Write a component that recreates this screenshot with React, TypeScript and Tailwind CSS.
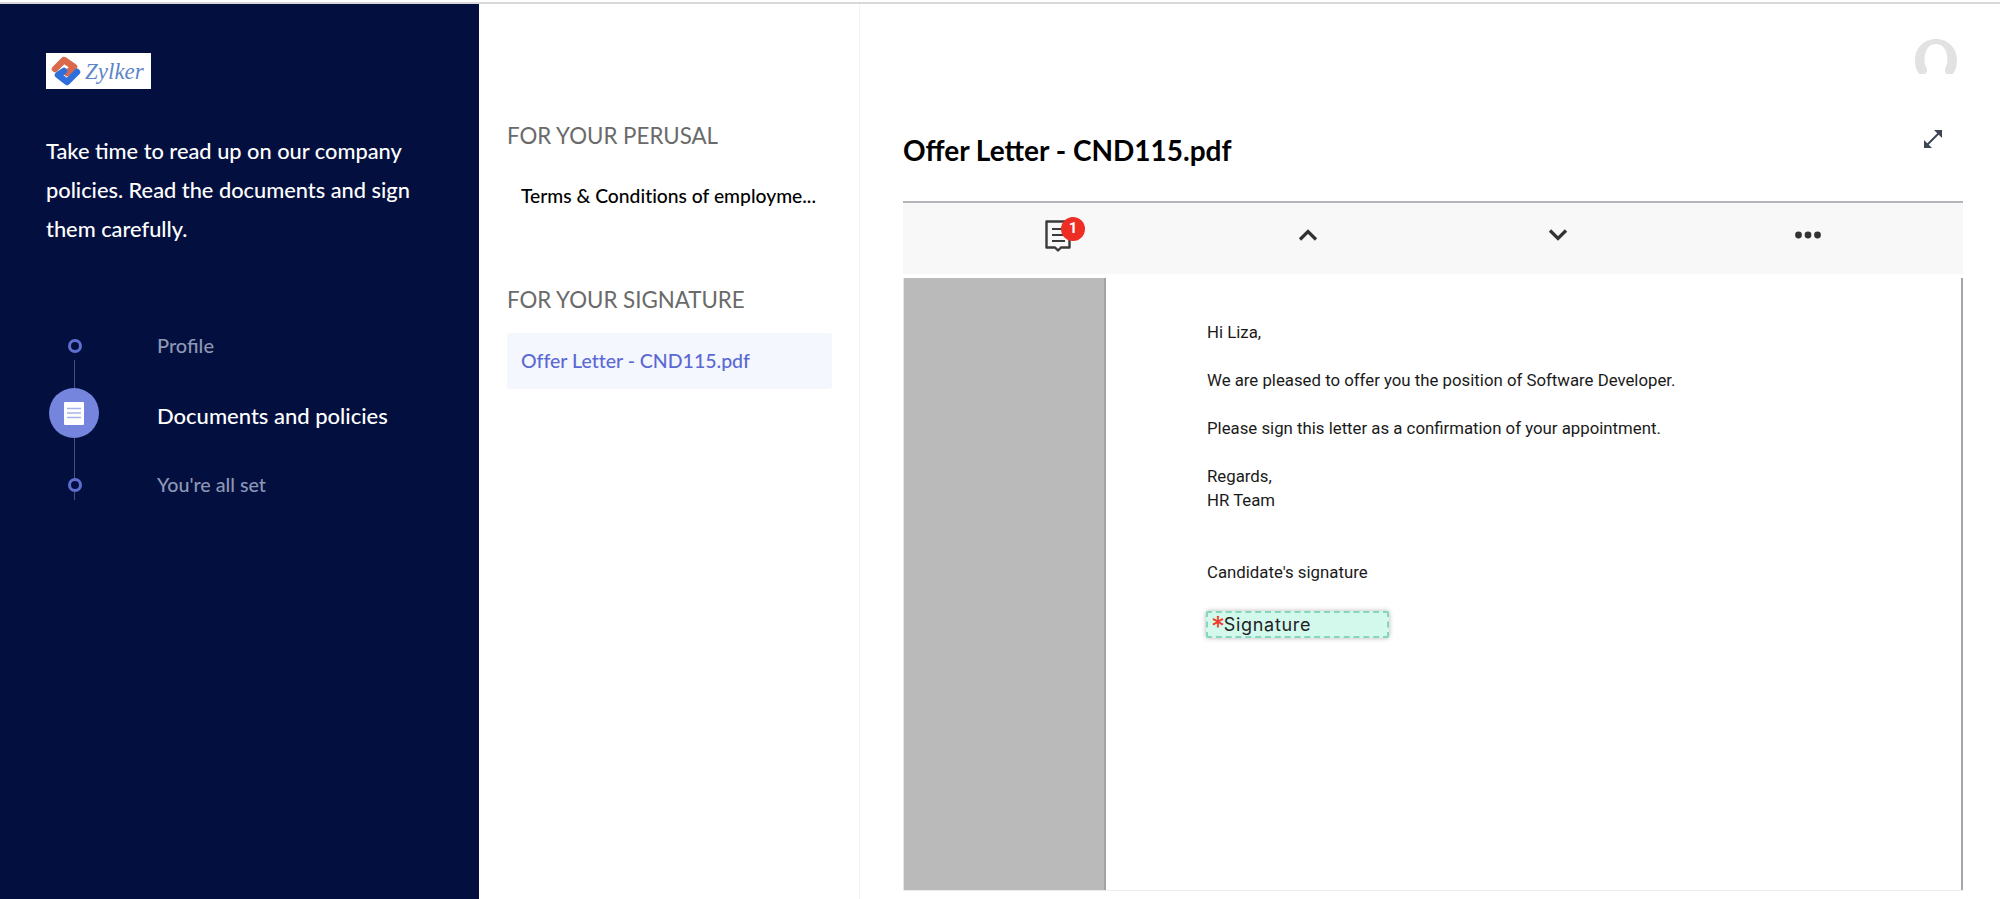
function ZylkerLogo() {
  return (
    <div className="flex items-center w-[105px] h-[36px] bg-white pl-[4px] overflow-hidden">
      <svg width="32" height="32" viewBox="0 0 32 32" fill="none" className="shrink-0">
        <path d="M5 14 L14 5 L24 12 L17 18" stroke="#d9694a" strokeWidth="6.5" strokeLinejoin="round" strokeLinecap="round" />
        <path d="M27 17 L17 27 L8 20 L14 16" stroke="#2f6fdc" strokeWidth="6.5" strokeLinejoin="round" strokeLinecap="round" />
      </svg>
      <span className="ml-[3px] font-['Liberation_Serif',serif] italic text-[23px] leading-none text-[#5d86c9]">Zylker</span>
    </div>
  )
}

function StepRing() {
  return <div className="w-[14px] h-[14px] ml-[2px] rounded-full border-[3px] border-[#5f6fd0]" />
}

function Sidebar() {
  return (
    <aside className="w-[479px] shrink-0 bg-[#03103f] px-[46px] pt-[49px] font-['Lato',sans-serif]">
      <ZylkerLogo />
      <p className="mt-[42px] text-[21.8px] leading-[39px] font-medium text-white">
        Take time to read up on our company policies. Read the documents and sign them carefully.
      </p>

      <div className="mt-[91px] flex">
        <div className="w-[62px] flex flex-col items-center ml-[-3px]">
          <StepRing />
          <div className="w-[1px] h-[28px] mt-[7px] bg-[#46507a]" />
          <div className="w-[50px] h-[50px] rounded-full bg-[#7584dc] flex items-center justify-center">
            <svg width="20" height="23" viewBox="0 0 20 23">
              <rect width="20" height="23" rx="1" fill="#fff" />
              <path d="M3 6.5h14M3 11h14M3 15.5h14" stroke="#a9b2ea" strokeWidth="1.4" />
            </svg>
          </div>
          <div className="w-[1px] h-[40px] bg-[#46507a]" />
          <StepRing />
          <div className="w-[1px] h-[8px] bg-[#46507a]" />
        </div>
        <div className="ml-[52px] flex flex-col">
          <span className="text-[20px] leading-[24px] mt-[-6px] font-medium text-[#8d97b5]">Profile</span>
          <span className="text-[22px] leading-[28px] mt-[45px] font-medium text-white">Documents and policies</span>
          <span className="text-[19.7px] leading-[24px] mt-[43px] font-medium text-[#8d97b5]">You're all set</span>
        </div>
      </div>
    </aside>
  )
}

function DocList() {
  return (
    <section className="w-[381px] shrink-0 pl-[28px] pr-[27px] pt-[118px] border-r border-[#f3f3f5] font-['Lato',sans-serif] [font-variant-ligatures:none]">
      <h3 className="text-[22.3px] leading-[28px] text-[#6a6a6a]">FOR YOUR PERUSAL</h3>
      <div className="mt-[32px] pl-[14px] text-[19.3px] leading-[28px] font-medium text-black whitespace-nowrap">Terms &amp; Conditions of employme...</div>
      <h3 className="mt-[76px] text-[22.3px] leading-[28px] text-[#6a6a6a]">FOR YOUR SIGNATURE</h3>
      <div className="mt-[19px] h-[56px] rounded-[3px] bg-[#f5f7fe] pl-[14px] flex items-center text-[19.5px] font-medium text-[#5a69d3]">
        Offer Letter - CND115.pdf
      </div>
    </section>
  )
}

function Viewer() {
  return (
    <div className="mt-[33px] h-[690px] flex flex-col border-t-2 border-[#b4b4ba] border-b border-b-[#ecebf2]">
      <div className="h-[71px] shrink-0 bg-[#f8f8f8] grid grid-cols-[repeat(4,250px)] items-center pl-[30px] pb-[8px]">
        <div className="flex justify-center">
          <div className="relative w-[26px] h-[33px] mt-[3px]">
            <svg width="26" height="33" viewBox="0 0 26 33" fill="none">
              <path d="M1.5 1.5h23v26h-8.5l-3 3-3-3h-8.5z" stroke="#3a3a3a" strokeWidth="2.4" strokeLinejoin="round" />
              <path d="M7 9h13M7 15h13M7 21h13" stroke="#3a3a3a" strokeWidth="2.2" />
            </svg>
            <div className="absolute top-[-3px] left-[16px] w-[24px] h-[24px] rounded-full bg-[#ee2e24] text-white text-[15px] font-bold flex items-center justify-center font-['Roboto',sans-serif]">1</div>
          </div>
        </div>
        <div className="flex justify-center">
          <svg width="20" height="12" viewBox="0 0 20 12" fill="none">
            <path d="M2 10.5 L10 2.5 L18 10.5" stroke="#333" strokeWidth="3.2" />
          </svg>
        </div>
        <div className="flex justify-center">
          <svg width="20" height="12" viewBox="0 0 20 12" fill="none">
            <path d="M2 1.5 L10 9.5 L18 1.5" stroke="#333" strokeWidth="3.2" />
          </svg>
        </div>
        <div className="flex justify-center">
          <svg width="26" height="8" viewBox="0 0 26 8" fill="#333">
            <circle cx="3.5" cy="4" r="3.4" />
            <circle cx="13" cy="4" r="3.4" />
            <circle cx="22.5" cy="4" r="3.4" />
          </svg>
        </div>
      </div>
      <div className="flex flex-1 mt-[4px] min-h-0">
        <div className="w-[203px] shrink-0 bg-[#bababa] border-r-2 border-[#a3a3a3] border-l border-l-[#e5e5ea]" />
        <div className="flex-1 bg-white border-r-2 border-[#a5a5ad] pl-[101px] pt-[42px] font-['Roboto',sans-serif] text-[16.8px] leading-[24px] text-[#1a1a1a]">
          <p>Hi Liza,</p>
          <p className="mt-[24px]">We are pleased to offer you the position of Software Developer.</p>
          <p className="mt-[24px]">Please sign this letter as a confirmation of your appointment.</p>
          <p className="mt-[24px]">Regards,</p>
          <p>HR Team</p>
          <p className="mt-[48px]">Candidate's signature</p>
          <div className="mt-[27px] ml-[-1px] w-[183px] h-[27px] bg-[#d3f9ec] border-2 border-dashed border-[#86d5bd] rounded-[2px] shadow-[0_0_5px_rgba(0,0,0,0.3)] flex items-center pl-[3px] font-['Inter',sans-serif] text-[18px] tracking-[0.7px] text-[#222]">
            <span className="text-[#f03a2e] text-[28px] leading-none mt-[4px]">*</span>
            <span className="ml-[-2px]">Signature</span>
          </div>
        </div>
      </div>
    </div>
  )
}

function Content() {
  return (
    <main className="flex-1 min-w-0 pl-[43px] pr-[37px] font-['Lato',sans-serif]">
      <div className="flex justify-end pt-[35px] pr-[6px]">
        <svg width="42" height="35" viewBox="0 0 42 35">
          <path d="M21 0C9 0 0 9 0 21c0 5 1 10 4 14h6c2-1 3-4 1-7-3-6-2-23 10-23s13 17 10 23c-2 3-1 6 1 7h6c3-4 4-9 4-14C42 9 33 0 21 0z" fill="#e2e2e2" />
        </svg>
      </div>
      <div className="mt-[58px] flex items-center justify-between">
        <h1 className="text-[28px] leading-[36px] font-bold text-black">Offer Letter - CND115.pdf</h1>
        <svg width="20" height="20" viewBox="0 0 20 20" fill="#3d4652" className="mr-[20px] mt-[-22px]">
          <path d="M4.5 15.5 L15.5 4.5" stroke="#3d4652" strokeWidth="2" />
          <path d="M11 1h8v8z" />
          <path d="M1 11v8h8z" />
        </svg>
      </div>
      <Viewer />
    </main>
  )
}

export default function App() {
  return (
    <div className="w-[2000px] h-[899px] overflow-hidden bg-white flex flex-col">
      <div className="h-[4px] shrink-0 bg-white border-b-2 border-[#d8d8d8]" />
      <div className="flex flex-1 min-h-0">
        <Sidebar />
        <DocList />
        <Content />
      </div>
    </div>
  )
}
